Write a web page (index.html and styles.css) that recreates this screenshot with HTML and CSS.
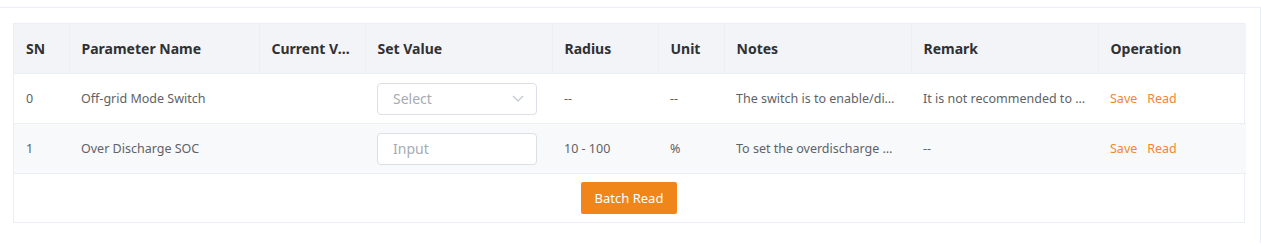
FILE: index.html
```html
<!DOCTYPE html>
<html lang="en">
<head>
  <meta charset="UTF-8">
  <title>Parameter Settings</title>
  <link rel="stylesheet" href="styles.css">
</head>
<body>

<div class="card">
  <div class="table-box">
    <table class="param-table">
      <colgroup>
        <col style="width: 55px">
        <col style="width: 190px">
        <col style="width: 106px">
        <col style="width: 187px">
        <col style="width: 106px">
        <col style="width: 66px">
        <col style="width: 187px">
        <col style="width: 187px">
        <col style="width: 148px">
      </colgroup>
      <thead>
        <tr>
          <th>SN</th>
          <th>Parameter Name</th>
          <th>Current Value</th>
          <th>Set Value</th>
          <th>Radius</th>
          <th>Unit</th>
          <th>Notes</th>
          <th>Remark</th>
          <th>Operation</th>
        </tr>
      </thead>
      <tbody>
        <tr>
          <td>0</td>
          <td>Off-grid Mode Switch</td>
          <td></td>
          <td>
            <div class="field select">
              <span class="placeholder">Select</span>
              <svg class="arrow" width="12" height="7" viewBox="0 0 12 7"><path d="M1 1l5 5 5-5" fill="none" stroke="#c0c4cc" stroke-width="1.2"/></svg>
            </div>
          </td>
          <td>--</td>
          <td>--</td>
          <td>The switch is to enable/disable the off-grid mode</td>
          <td>It is not recommended to change this value</td>
          <td class="ops"><a class="op">Save</a><a class="op">Read</a></td>
        </tr>
        <tr class="striped">
          <td>1</td>
          <td>Over Discharge SOC</td>
          <td></td>
          <td>
            <div class="field">
              <span class="placeholder">Input</span>
            </div>
          </td>
          <td>10 - 100</td>
          <td>%</td>
          <td>To set the overdischarge SOC of the battery</td>
          <td>--</td>
          <td class="ops"><a class="op">Save</a><a class="op">Read</a></td>
        </tr>
      </tbody>
    </table>
    <div class="table-footer">
      <button class="btn-primary">Batch Read</button>
    </div>
  </div>
</div>

</body>
</html>
```

FILE: styles.css
```css
body {
  margin: 0;
  background: #fff;
  font-family: "Noto Sans", Arial, sans-serif;
  color: #606266;
}

.card {
  margin-top: 7px;
  width: 1261px;
  padding: 15px 15px 20px 13px;
  border-top: 1px solid #ebeef5;
  border-right: 1px solid #ebeef5;
  box-sizing: border-box;
}

.table-box {
  border: 1px solid #ebeef5;
}

.param-table {
  width: 100%;
  border-collapse: collapse;
  table-layout: fixed;
}

.param-table th {
  height: 49px;
  padding: 0 12px;
  background: #f3f4f8;
  border-right: 1px solid #ebeef5;
  border-bottom: 1px solid #ebeef5;
  text-align: left;
  font-size: 14px;
  font-weight: bold;
  color: #303133;
  white-space: nowrap;
  overflow: hidden;
  text-overflow: ellipsis;
}

.param-table th:last-child {
  border-right: none;
}

.param-table td {
  height: 49px;
  padding: 0 12px;
  border-bottom: 1px solid #ebeef5;
  font-size: 12.5px;
  color: #606266;
  white-space: nowrap;
  overflow: hidden;
  text-overflow: ellipsis;
}

.param-table tr.striped td {
  background: #f8f9fb;
}

.field {
  display: flex;
  align-items: center;
  justify-content: space-between;
  width: 160px;
  height: 32px;
  padding: 0 12px 0 15px;
  box-sizing: border-box;
  border: 1px solid #dcdfe6;
  border-radius: 4px;
  background: #fff;
}

.placeholder {
  font-size: 14px;
  color: #a8abb2;
}

.ops {
  padding-top: 2px;
}

.op {
  font-size: 12.5px;
  color: #f5862e;
  margin-right: 10px;
  cursor: pointer;
}

.table-footer {
  display: flex;
  justify-content: center;
  padding: 8px 0;
}

.btn-primary {
  width: 96px;
  height: 32px;
  border: none;
  border-radius: 2px;
  background: #f0861a;
  color: #fff;
  font-family: "Noto Sans", Arial, sans-serif;
  font-size: 13px;
  cursor: pointer;
}
```
